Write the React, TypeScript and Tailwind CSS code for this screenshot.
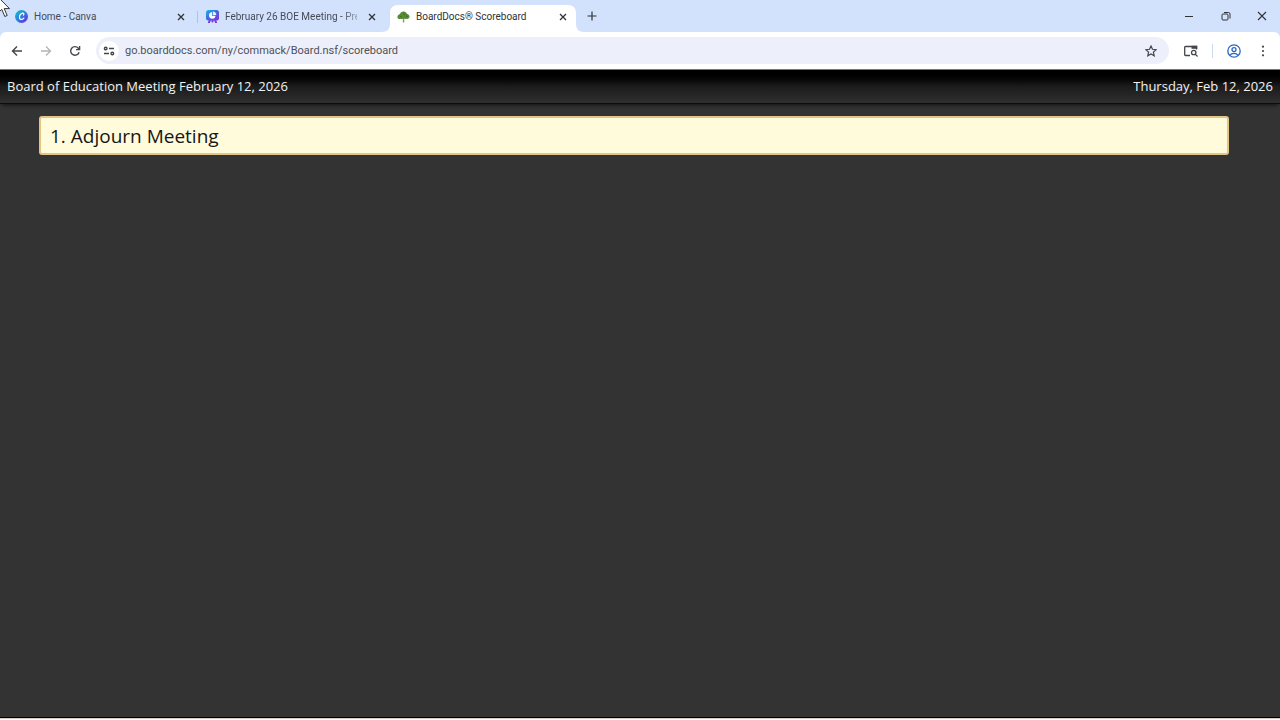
import type { ReactNode } from "react";

function CanvaIcon() {
  return (
    <svg viewBox="0 0 24 24" className="size-[13px] shrink-0" aria-hidden="true">
      <defs>
        <linearGradient id="canva" x1="0" y1="0.2" x2="0.8" y2="1">
          <stop offset="0" stopColor="#12b9d0" />
          <stop offset="0.5" stopColor="#2d7fdc" />
          <stop offset="1" stopColor="#7028e0" />
        </linearGradient>
      </defs>
      <circle cx="12" cy="12" r="12" fill="url(#canva)" />
      <path
        d="M15.6 9.3c1.5-1.5.8-3.8-1.4-3.6-3.6.4-6.3 4.6-5.9 8.3.4 4.6 5.2 4.3 8 .8"
        fill="none"
        stroke="#fff"
        strokeWidth="2.2"
        strokeLinecap="round"
      />
    </svg>
  );
}

function PresentationIcon() {
  return (
    <svg viewBox="0 0 26 26" className="size-[13px] shrink-0" aria-hidden="true">
      <defs>
        <linearGradient id="deck" x1="0" y1="0" x2="1" y2="1">
          <stop offset="0" stopColor="#10c0dc" />
          <stop offset="0.45" stopColor="#3b6ce6" />
          <stop offset="1" stopColor="#8a2be2" />
        </linearGradient>
      </defs>
      <path d="M8 19l-2 6M18 19l2 6M13 20v3" stroke="#7b35e0" strokeWidth="4" strokeLinecap="round" />
      <rect width="26" height="21" rx="5" fill="url(#deck)" />
      <path d="M12 4.5a6.5 6.5 0 1 0 7 7h-7z" fill="#fff" />
      <path d="M13.5 3a7 7 0 0 1 7 7h-7z" fill="#d9f5ff" />
    </svg>
  );
}

function TreeIcon() {
  return (
    <svg viewBox="0 0 26 24" className="h-3 w-[13px] shrink-0" aria-hidden="true">
      <path d="M12 12h2.5v11h-3z" fill="#a58a6c" />
      <path
        d="M13 1c4 0 6 2 6.5 4.5C23 6 25.5 9 25 12c-.5 3-4 4.5-6.5 3.5-2 1.5-4 .5-5.5-1-1.5 2-4 2.5-5.5 1C4.5 17 1 15.5.8 12.5.6 9.5 3 7 6 6c.5-3 3.500-5 7-5z"
        fill="#568b35"
      />
      <path d="M6 10l3 2M13 5l2 3M18 10l3 1" stroke="#35691f" strokeWidth="2" />
    </svg>
  );
}

function CloseGlyph() {
  return (
    <svg viewBox="0 0 8 8" className="size-2" aria-hidden="true">
      <path d="M1 1l6 6M7 1L1 7" stroke="currentColor" strokeWidth="1.3" />
    </svg>
  );
}

function Tab({ icon, title, active = false, faded = false, divider = false }: { icon: ReactNode; title: string; active?: boolean; faded?: boolean; divider?: boolean }) {
  return (
    <div className="relative flex h-[27px] w-[191px] shrink-0 items-center pb-1 pl-2">
      {active && (
        <svg viewBox="0 0 202 27" className="absolute top-0 -left-[7px] h-[27px] w-[202px]" aria-hidden="true">
          <path d="M0 27c5 0 8-3 8-8V8c0-5 3-8 8-8h170c5 0 8 3 8 8v11c0 5 3 8 8 8z" fill="#fff" />
        </svg>
      )}
      <button role="tab" aria-selected={active} className="relative flex shrink-0 items-center gap-[6px]">
        {icon}
        <span
          className={`w-[132px] text-left text-[10px] leading-4 whitespace-nowrap ${
            active ? "text-[#303236]" : "text-[#454b57]"
          } ${faded ? "[mask-image:linear-gradient(to_right,black_88%,transparent_108%)]" : ""}`}
        >
          {title}
        </span>
      </button>
      <button aria-label={`Close ${title}`} className="relative ml-[7px] flex size-4 shrink-0 items-center justify-center text-[#303236]">
        <CloseGlyph />
      </button>
      {divider && <span className="ml-2 h-3 w-px bg-[#a9c4ee]" />}
    </div>
  );
}

function TabStrip() {
  return (
    <div className="flex h-8 items-end bg-[#d3e2fc] pl-[7px] text-[#303236]">
      <div role="tablist" className="flex">
        <Tab icon={<CanvaIcon />} title="Home - Canva" divider />
        <Tab icon={<PresentationIcon />} title="February 26 BOE Meeting - Pre" faded />
        <Tab icon={<TreeIcon />} title="BoardDocs® Scoreboard" active />
      </div>
      <button aria-label="New tab" className="ml-px flex size-[22px] self-center items-center justify-center">
        <svg viewBox="0 0 10 10" className="size-[10px]" aria-hidden="true">
          <path d="M5 .5v9M.5 5h9" stroke="currentColor" strokeWidth="1.2" />
        </svg>
      </button>
      <div className="ml-auto flex h-8">
        <button aria-label="Minimize" className="flex w-9 items-center justify-center">
          <svg viewBox="0 0 10 10" className="size-[10px]" aria-hidden="true">
            <path d="M1 5.5h8" stroke="currentColor" />
          </svg>
        </button>
        <button aria-label="Restore" className="flex w-[37px] items-center justify-center">
          <svg viewBox="0 0 10 10" className="size-[10px]" fill="none" stroke="currentColor" aria-hidden="true">
            <rect x="1" y="3" width="6" height="6" rx="1" />
            <path d="M3 1.5h4.5a1.5 1.5 0 0 1 1.5 1.5v4.5" />
          </svg>
        </button>
        <button aria-label="Close window" className="flex w-9 items-center justify-center">
          <svg viewBox="0 0 10 10" className="size-[10px]" aria-hidden="true">
            <path d="M1 1l8 8M9 1L1 9" stroke="currentColor" strokeWidth="1.1" />
          </svg>
        </button>
      </div>
    </div>
  );
}

function Toolbar() {
  return (
    <div className="bg-[#d3e2fc]">
      <div className="flex h-[37px] items-center rounded-t-md bg-white px-[7px] text-[#43464b]">
        <div className="flex gap-[9px]">
          <button aria-label="Back" className="flex size-5 items-center justify-center">
            <svg viewBox="0 0 12 12" className="size-3" fill="none" stroke="currentColor" strokeWidth="1.4" aria-hidden="true">
              <path d="M11 6H1.5M6 1.5L1.5 6 6 10.5" />
            </svg>
          </button>
          <button aria-label="Forward" disabled className="flex size-5 items-center justify-center text-[#b2b4b8]">
            <svg viewBox="0 0 12 12" className="size-3" fill="none" stroke="currentColor" strokeWidth="1.3" aria-hidden="true">
              <path d="M1 6h9.5M6 1.5L10.5 6 6 10.5" />
            </svg>
          </button>
          <button aria-label="Reload" className="flex size-5 items-center justify-center">
            <svg viewBox="0 0 12 12" className="size-3" fill="none" stroke="currentColor" strokeWidth="1.4" aria-hidden="true">
              <path d="M10.1 7.2A4.3 4.3 0 1 1 9.3 3.2L10.6 4.500M10.6 1v3.6H7" />
            </svg>
          </button>
        </div>
        <div className="ml-[11px] flex h-[27px] min-w-0 flex-1 items-center rounded-full bg-[#edf0fa] px-[3px]">
          <button aria-label="Site information" className="flex size-5 shrink-0 items-center justify-center rounded-full bg-white">
            <svg viewBox="0 0 12 12" className="size-3" fill="none" stroke="currentColor" strokeWidth="1.4" aria-hidden="true">
              <circle cx="2.7" cy="3.5" r="1.3" />
              <path d="M6 3.5H11M1 8.5h5" />
              <circle cx="9.3" cy="8.5" r="1.3" />
            </svg>
          </button>
          <input
            aria-label="Address"
            className="ml-[6px] min-w-0 flex-1 bg-transparent text-[11px] leading-5 text-[#4e5157] outline-none"
            defaultValue="go.boarddocs.com/ny/commack/Board.nsf/scoreboard"
            spellCheck={false}
          />
          <button aria-label="Bookmark this page" className="mr-[5px] flex size-5 items-center justify-center">
            <svg viewBox="0 0 12 12" className="size-3" fill="none" stroke="currentColor" strokeWidth="1.2" aria-hidden="true">
              <path d="M6 1l1.5 3.3 3.6.4-2.7 2.4.8 3.6L6 8.9l-3.2 1.8.8-3.6L.9 4.7l3.6-.4z" />
            </svg>
          </button>
        </div>
        <button aria-label="Search tabs" className="ml-3 flex size-5 items-center justify-center">
          <svg viewBox="0 0 14 12" className="h-3 w-[14px]" fill="none" stroke="currentColor" strokeWidth="1.3" aria-hidden="true">
            <path d="M6 10.5H1.500a.8.8 0 0 1-.8-.8V2.300a.8.8 0 0 1 .8-.8h11v3" />
            <path d="M7.5 2.3h5.8" strokeWidth="3" />
            <circle cx="9.7" cy="7.5" r="2.2" />
            <path d="M11.2 9.1l2.4 2.4" />
          </svg>
        </button>
        <span className="mx-[11px] h-[14px] w-px bg-[#ccd8ee]" />
        <button aria-label="Profile" className="flex size-5 items-center justify-center text-[#2b66c2]">
          <svg viewBox="0 0 14 14" className="size-[14px]" fill="none" stroke="currentColor" strokeWidth="1.3" aria-hidden="true">
            <circle cx="7" cy="7" r="6.2" />
            <circle cx="7" cy="5.6" r="2" />
            <path d="M3 11.4c1.7-2.6 6.3-2.6 8 0" />
          </svg>
        </button>
        <button aria-label="Menu" className="ml-[9px] flex size-5 items-center justify-center">
          <svg viewBox="0 0 12 12" className="size-3" fill="currentColor" aria-hidden="true">
            <circle cx="6" cy="1.7" r="1.1" />
            <circle cx="6" cy="6" r="1.1" />
            <circle cx="6" cy="10.3" r="1.1" />
          </svg>
        </button>
      </div>
    </div>
  );
}

export default function App() {
  return (
    <div className="relative flex min-h-screen flex-col overflow-hidden bg-white font-['Open_Sans',sans-serif]">
      <div className="font-[Roboto,sans-serif]">
        <TabStrip />
        <Toolbar />
      </div>
      <header className="relative flex h-[35px] items-center justify-between border-t border-b border-t-[#777] border-b-[#0c0c0c] bg-linear-to-b from-black via-[#1c1c1c] to-[#2f2f2f] px-[7px] pb-[2px] text-[13px] leading-5 text-[#f2f2f2] shadow-[0_3px_4px_-2px_#111]">
        <h1>Board of Education Meeting February 12, 2026</h1>
        <time dateTime="2026-02-12">Thursday, Feb 12, 2026</time>
      </header>
      <main className="flex-1 border-b border-black bg-[#333] pt-3 pr-[51px] pl-[39px]">
        <h2 className="rounded-[3px] border-2 border-[#e3c585] bg-[#fffbdb] px-[9px] pt-[5px] pb-[3px] text-[19px] leading-[27px] text-[#161616]">
          1. Adjourn Meeting
        </h2>
      </main>
      <div className="h-[2px] border-t border-[#d2cdc4] bg-white" />
      <svg viewBox="0 0 14 22" className="absolute -top-1 -left-[3px] h-[22px] w-[14px]" aria-hidden="true">
        <path d="M1 1v16l3.8-3.6 3 7.1 2.4-1-3-6.9h5.3z" fill="#fff" stroke="#333" strokeWidth="1" />
      </svg>
    </div>
  );
}
